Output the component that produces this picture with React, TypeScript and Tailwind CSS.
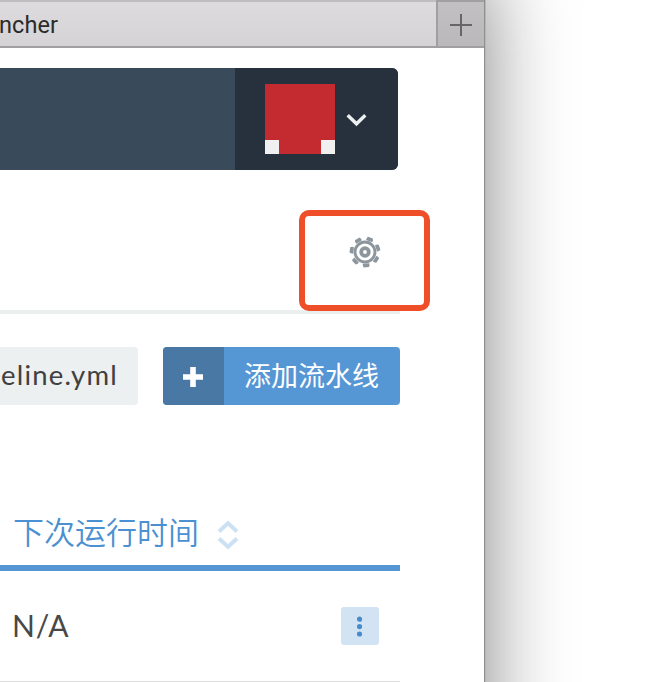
import React from "react";

const TEETH = [85, 136.4, 187.9, 239.3, 290.7, 342.1, 33.6];

function GearIcon() {
  return (
    <svg width="32" height="32" viewBox="-16 -16 32 32" fill="none" stroke="#8c969c" className="block">
      <circle r="10" strokeWidth="2.9" />
      <circle r="3.8" strokeWidth="3.8" />
      {TEETH.map((a) => (
        <path key={a} d="M11.6-3.3H13.8L15.3-2.6V2.6L13.8 3.3H11.6Z" fill="#8c969c" stroke="none" transform={`rotate(${a})`} />
      ))}
    </svg>
  );
}

function TabBar() {
  return (
    <div className="flex h-12">
      <div className="flex h-12 w-[436px] items-center border-y-2 border-t-[#bfbdbf] border-b-[#a29fa2] bg-linear-to-b from-[#dddbdd] to-[#d5d3d5] pt-[3px]">
        <span className="-ml-px font-['Roboto','Liberation_Sans',sans-serif] text-[23.5px] leading-none tracking-[0.1px] text-[#2b2a2b]">ncher</span>
      </div>
      <div className="flex h-12 w-12 items-center justify-center border-y-2 border-l-2 border-[#a29fa2] bg-linear-to-b from-[#c2c0c2] to-[#bab8ba]">
        <svg width="22" height="22" viewBox="0 0 22 22" className="block translate-y-px" stroke="#666" strokeWidth="2">
          <path d="M11 0V22M0 11H22" />
        </svg>
      </div>
    </div>
  );
}

function Header() {
  return (
    <header className="mt-5 flex h-[102px] w-[398px] justify-end overflow-hidden rounded-r-[6px] bg-[#394a5b]">
      <div className="flex w-[163px] items-center bg-[#27303d] pl-[30px]">
        <div className="flex h-[70px] w-[70px] items-end justify-between bg-[#c42b30]">
          <div className="h-3.5 w-3.5 bg-[#f0f0f0]" />
          <div className="h-3.5 w-3.5 bg-[#f0f0f0]" />
        </div>
        <svg width="21" height="14" viewBox="0 0 21 14" className="mt-px ml-[11px]" fill="none" stroke="#ecf0f1" strokeWidth="3.4">
          <path d="M1.7 2.2L10.5 10.8L19.3 2.2" />
        </svg>
      </div>
    </header>
  );
}

function Toolbar() {
  return (
    <div className="mt-[33px] flex h-[58px] w-[400px] justify-between">
      <div className="flex w-[138px] items-center justify-end rounded-r-[4px] bg-[#ecf0f1] pr-5 pb-0.5">
        <span className="font-['Lato','Liberation_Sans',sans-serif] text-[27.5px] leading-none tracking-[1.2px] whitespace-nowrap text-[#404040]">eline.yml</span>
      </div>
      <button className="flex w-[237px] overflow-hidden rounded-[4px] bg-[#5596d5] text-white">
        <span className="flex h-full w-[61px] items-center justify-center bg-[#4a78a5] pt-px pr-px">
          <svg width="20" height="20" viewBox="0 0 20 20" stroke="#fff" strokeWidth="5.6">
            <path d="M10 0V20M0 10H20" />
          </svg>
        </span>
        <span className="flex h-full flex-1 items-center pb-[3px] pl-5 font-['Noto_Sans_CJK_SC',sans-serif] text-[27px] leading-none whitespace-nowrap">添加流水线</span>
      </button>
    </div>
  );
}

function ScheduleTable() {
  return (
    <div className="mt-[95px] w-[400px]">
      <div className="flex h-[71px] items-center border-b-6 border-[#5596d5] pl-[13px]">
        <span className="pb-[5px] font-['Noto_Sans_CJK_SC',sans-serif] text-[31px] leading-none font-[350] whitespace-nowrap text-[#4b90d2]">下次运行时间</span>
        <svg width="22" height="32" viewBox="0 0 22 32" className="mt-1 ml-[18px]" fill="none" stroke="#cde1f4" strokeWidth="4">
          <path d="M2 12.5L11 4.2L20 12.5M2 19.5L11 27.8L20 19.5" />
        </svg>
      </div>
      <div className="flex h-[111px] items-center justify-between border-b border-[#dcdcdc] pr-[21px] pl-3">
        <span className="pb-[3px] font-['Lato','Liberation_Sans',sans-serif] text-[30px] leading-none tracking-[0.8px] text-[#484848]">N/A</span>
        <button className="flex h-[38px] w-[38px] items-center justify-center rounded-[3px] bg-[#d2e4f3]">
          <svg width="6" height="22" viewBox="0 0 6 22" fill="#468bcb" className="block">
            <circle cx="2.5" cy="4.2" r="2.6" />
            <circle cx="2.5" cy="11.6" r="2.6" />
            <circle cx="2.5" cy="19" r="2.6" />
          </svg>
        </button>
      </div>
    </div>
  );
}

export default function App() {
  return (
    <div className="h-[682px] w-[672px] overflow-hidden bg-white">
      <div className="relative h-[900px] w-[485px] border-r border-[#8f8f8f] bg-white shadow-[0_0_0_1px_#b7b7b7,0_-26px_80px_rgba(0,0,0,0.49)]">
        <TabBar />
        <Header />
        <div className="flex h-36 w-[400px] justify-end border-b-4 border-[#ecefef] pt-[66px] pr-[19.5px]">
          <GearIcon />
        </div>
        <div className="absolute top-[210px] left-[299px] h-[101px] w-[131px] rounded-[10px] border-6 border-[#ee4f28]" />
        <Toolbar />
        <ScheduleTable />
      </div>
    </div>
  );
}
